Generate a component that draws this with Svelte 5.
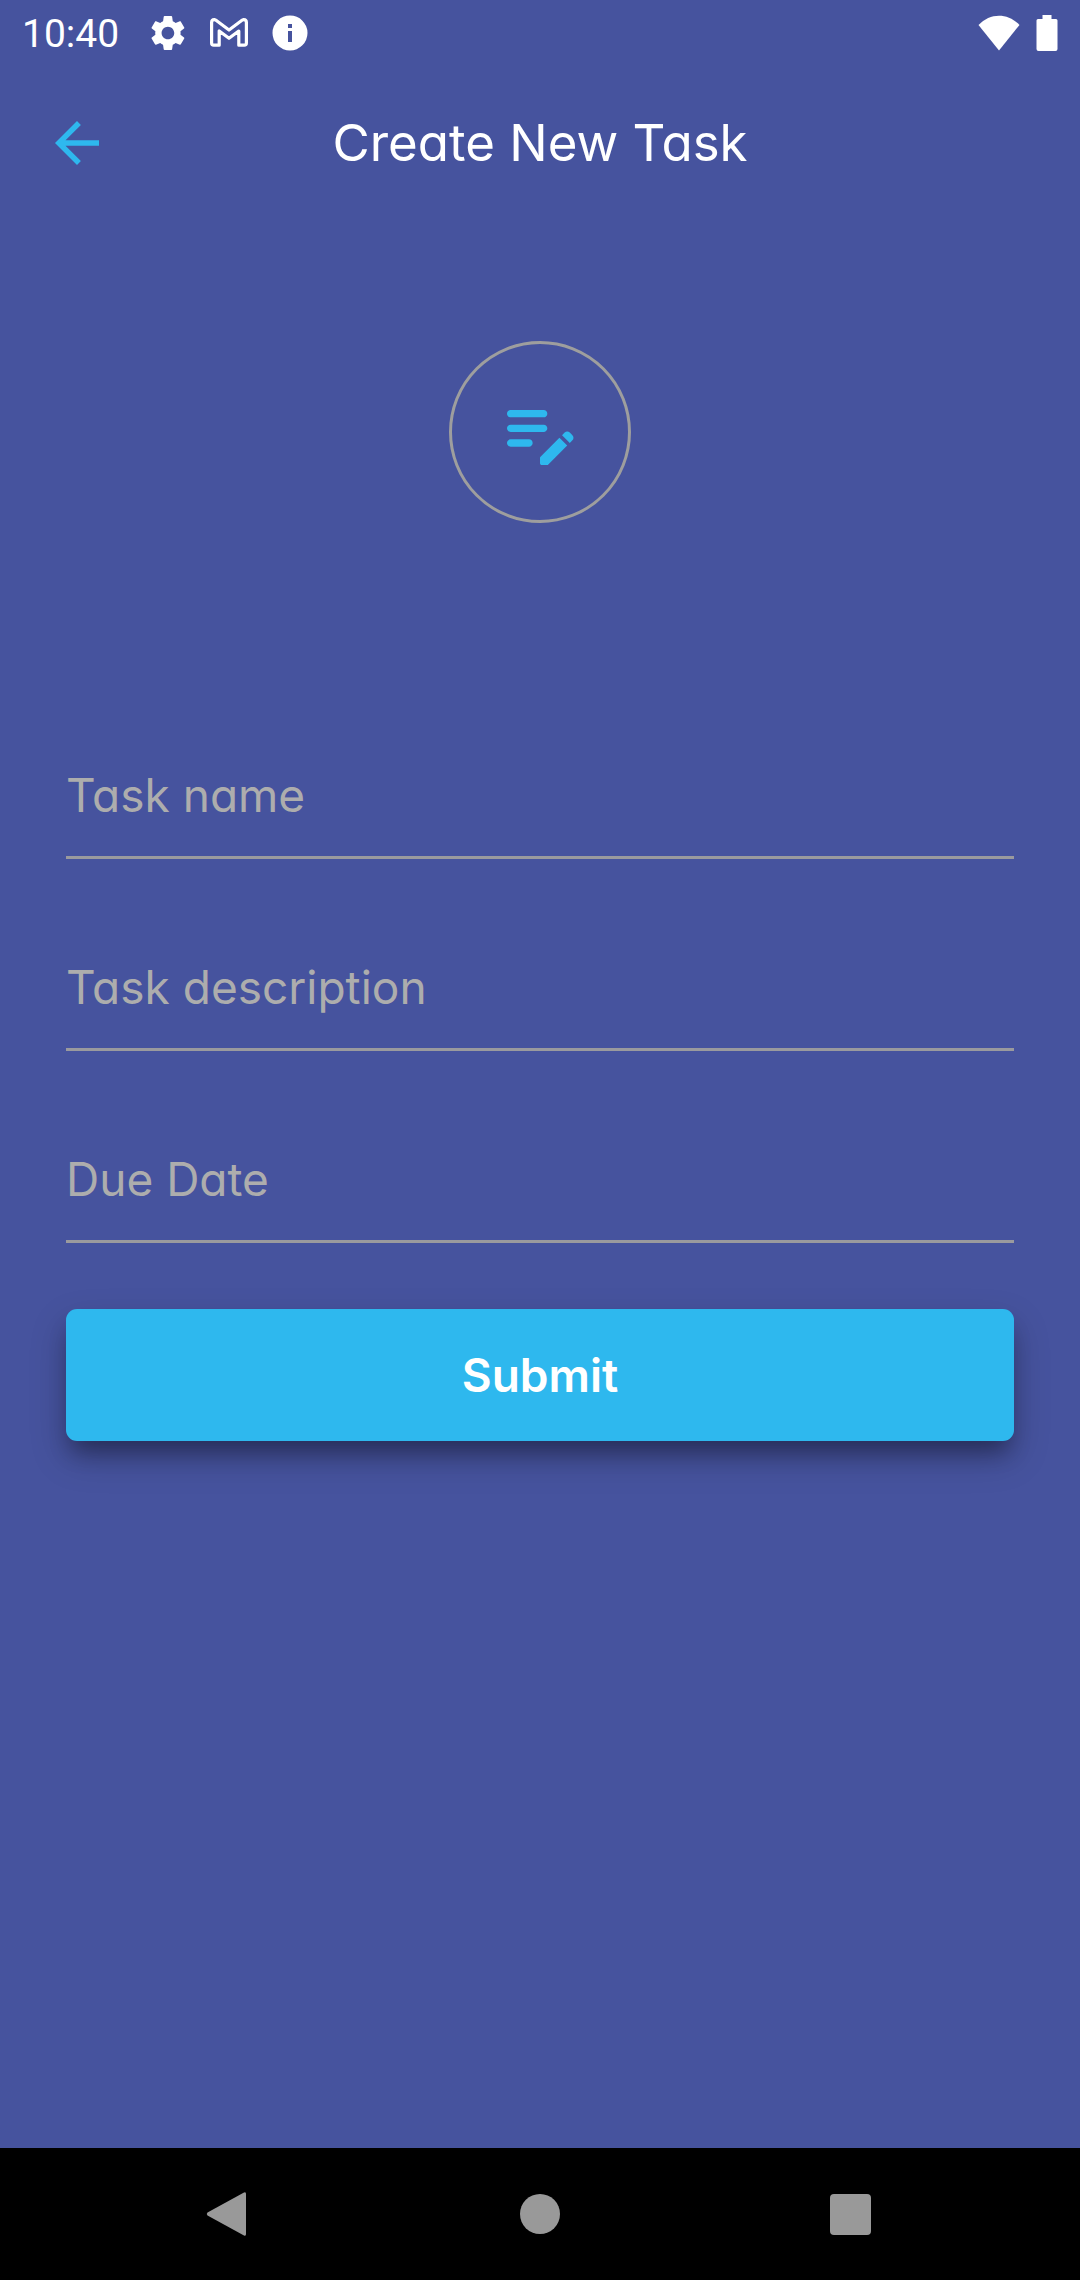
<script>
  let task = $state({ name: '', description: '', due: '' });

  const fields = [
    { key: 'name', label: 'Task name' },
    { key: 'description', label: 'Task description' },
    { key: 'due', label: 'Due Date' }
  ];

  function submit(event) {
    event.preventDefault();
  }
</script>

<div class="screen">
  <div class="status">
    <div class="group">
      <time class="clock">10:40</time>
      <svg class="status-icon" viewBox="0 0 42 42" aria-hidden="true">
        <path transform="translate(-0.2 -0.1) scale(1.76)" fill="currentColor" d="M19.14 12.94c.04-.3.06-.61.06-.94 0-.32-.02-.64-.07-.94l2.03-1.58c.18-.14.23-.41.12-.61l-1.92-3.32c-.12-.22-.37-.29-.59-.22l-2.39.96c-.5-.38-1.03-.7-1.62-.94l-.36-2.54c-.04-.24-.24-.41-.48-.41h-3.84c-.24 0-.43.17-.47.41l-.36 2.54c-.59.24-1.13.57-1.62.94l-2.39-.96c-.22-.08-.47 0-.59.22L2.74 8.87c-.12.21-.08.47.12.61l2.03 1.58c-.05.3-.09.63-.09.94s.02.64.07.94l-2.03 1.58c-.18.14-.23.41-.12.61l1.92 3.32c.12.22.37.29.59.22l2.39-.96c.5.38 1.03.7 1.62.94l.36 2.54c.05.24.24.41.48.41h3.84c.24 0 .44-.17.47-.41l.36-2.54c.59-.24 1.13-.56 1.62-.94l2.39.96c.22.08.47 0 .59-.22l1.92-3.32c.12-.22.07-.47-.12-.61l-2.01-1.58zM12 15.6c-1.98 0-3.6-1.62-3.6-3.6s1.62-3.6 3.6-3.6 3.6 1.62 3.6 3.6-1.62 3.6-3.6 3.6z" />
      </svg>
      <svg class="status-icon" viewBox="0 0 42 42" aria-hidden="true">
        <path fill="none" stroke="currentColor" stroke-width="3.2" stroke-linejoin="round" d="M3.6 10.5Q3.6 7.6 6.2 7.6L8 8.2L21 18L34 8.2L35.8 7.6Q38.4 7.6 38.4 10.5V31Q38.4 33.2 36.2 33.2H30.8V19L21 26.3L11.2 19V33.2H5.8Q3.6 33.2 3.6 31Z" />
      </svg>
      <svg class="status-icon" viewBox="0 0 42 42" aria-hidden="true">
        <path fill="currentColor" fill-rule="evenodd" d="M21 3.500a17.500 17.500 0 1 0 0 35a17.500 17.500 0 1 0 0-35ZM19 12h4v4h-4ZM19 19h4v11h-4Z" />
      </svg>
    </div>
    <div class="group signals">
      <svg class="wifi" viewBox="0 0 42 36" aria-hidden="true">
        <path fill="currentColor" d="M.5 10C12-2.500 30-2.500 41.500 10L21 35.500Z" />
      </svg>
      <svg class="battery" viewBox="0 0 22 36" aria-hidden="true">
        <path fill="currentColor" d="M6.500 0h9v4H20q1.500 0 1.500 1.500V34q0 2-2 2h-17q-2 0-2-2V5.500Q.5 4 2 4h4.500Z" />
      </svg>
    </div>
  </div>

  <header class="appbar">
    <button class="back" type="button" aria-label="Back">
      <svg viewBox="0 0 24 24" aria-hidden="true">
        <path fill="currentColor" d="M20 11H7.830l5.590-5.590L12 4l-8 8 8 8 1.410-1.410L7.830 13H20v-2z" />
      </svg>
    </button>
    <h1>Create New Task</h1>
  </header>

  <main>
    <div class="badge">
      <svg viewBox="0 0 24 24" aria-hidden="true">
        <path fill="currentColor" d="M14 11c0 .55-.45 1-1 1H4c-.55 0-1-.45-1-1s.45-1 1-1h9c.55 0 1 .45 1 1zM3 7c0 .55.45 1 1 1h9c.55 0 1-.45 1-1s-.45-1-1-1H4c-.55 0-1 .45-1 1zm7 8c0-.55-.45-1-1-1H4c-.55 0-1 .45-1 1s.45 1 1 1h5c.55 0 1-.45 1-1zm8.010-2.130.71-.71c.39-.39 1.020-.39 1.410 0l.71.71c.39.39.39 1.020 0 1.410l-.71.71-2.120-2.120zm-.71.71-5.160 5.160c-.09.09-.14.21-.14.35v1.410c0 .28.22.5.5.5h1.410c.13 0 .26-.05.35-.15l5.160-5.160-2.120-2.110z" />
      </svg>
    </div>

    <form onsubmit={submit}>
      {#each fields as field (field.key)}
        <input
          type="text"
          name={field.key}
          aria-label={field.label}
          placeholder={field.label}
          bind:value={task[field.key]}
        />
      {/each}
      <button class="submit" type="submit">Submit</button>
    </form>
  </main>

  <nav class="system" aria-label="System">
    <button type="button" aria-label="Back">
      <svg viewBox="0 0 66 66" aria-hidden="true">
        <path fill="currentColor" d="M50 11.500Q52 10.500 52 13V53Q52 55.500 50 54.500L13.500 34.500Q12 33 13.500 31.500Z" />
      </svg>
    </button>
    <button type="button" aria-label="Home">
      <svg viewBox="0 0 66 66" aria-hidden="true">
        <circle cx="33" cy="33" r="20" fill="currentColor" />
      </svg>
    </button>
    <button type="button" aria-label="Recent apps">
      <svg viewBox="0 0 66 66" aria-hidden="true">
        <rect x="10" y="13" width="41" height="41" rx="4" fill="currentColor" />
      </svg>
    </button>
  </nav>
</div>

<style>
  :global(body) {
    margin: 0;
    background: #46539e;
  }

  .screen {
    display: flex;
    flex-direction: column;
    min-height: 100vh;
    background: #46539e;
    color: #fff;
    font-family: Inter, "Open Sans", sans-serif;
    font-feature-settings: "cv11" 1;
  }

  svg {
    display: block;
  }

  button {
    margin: 0;
    padding: 0;
    border: 0;
    background: none;
    color: inherit;
    font: inherit;
    cursor: pointer;
  }

  .status {
    display: flex;
    justify-content: space-between;
    align-items: center;
    height: 66px;
    padding: 0 22px;
  }

  .group {
    display: flex;
    align-items: center;
    gap: 19px;
  }

  .clock {
    margin-right: 9px;
    padding-top: 2px;
    font-family: Roboto, sans-serif;
    font-size: 39px;
    line-height: 48px;
  }

  .status-icon {
    width: 42px;
    height: 42px;
  }

  .signals {
    gap: 16px;
  }

  .wifi {
    width: 42px;
    height: 36px;
  }

  .battery {
    width: 22px;
    height: 36px;
  }

  .appbar {
    display: grid;
    grid-template-columns: 66px 1fr 66px;
    align-items: center;
    height: 154px;
    padding: 0 44px;
  }

  .back {
    color: #2eb8ee;
  }

  h1 {
    margin: 0;
    text-align: center;
    font-size: 51px;
    font-weight: 400;
    line-height: 72px;
  }

  main {
    flex: 1;
    padding: 121px 66px 66px;
  }

  .badge {
    display: flex;
    align-items: center;
    justify-content: center;
    box-sizing: border-box;
    width: 182px;
    height: 182px;
    margin: 0 auto 210px;
    border: 3px solid #9e9e9e;
    border-radius: 50%;
    color: #2eb8ee;
  }

  .badge svg {
    width: 88px;
    height: 88px;
  }

  form {
    display: flex;
    flex-direction: column;
    gap: 66px;
  }

  input {
    box-sizing: border-box;
    width: 100%;
    height: 126px;
    padding: 0;
    border: 0;
    border-bottom: 3px solid #9a9a9e;
    border-radius: 0;
    outline: 0;
    background: none;
    color: #fff;
    font: inherit;
    font-feature-settings: inherit;
    font-size: 46px;
  }

  input::placeholder {
    color: #adadad;
    opacity: 1;
  }

  .submit {
    height: 132px;
    border-radius: 11px;
    background: #2eb8ee;
    box-shadow:
      0 16px 22px -6px rgba(0, 0, 0, 0.3),
      0 16px 36px rgba(0, 0, 0, 0.22);
    font-size: 46px;
    font-weight: 600;
    font-feature-settings: inherit;
  }

  .system {
    display: grid;
    grid-template-columns: repeat(3, 1fr);
    justify-items: center;
    align-items: center;
    height: 132px;
    padding: 0 70px;
    background: #000;
    color: #999;
  }

  .system svg {
    width: 66px;
    height: 66px;
  }
</style>
